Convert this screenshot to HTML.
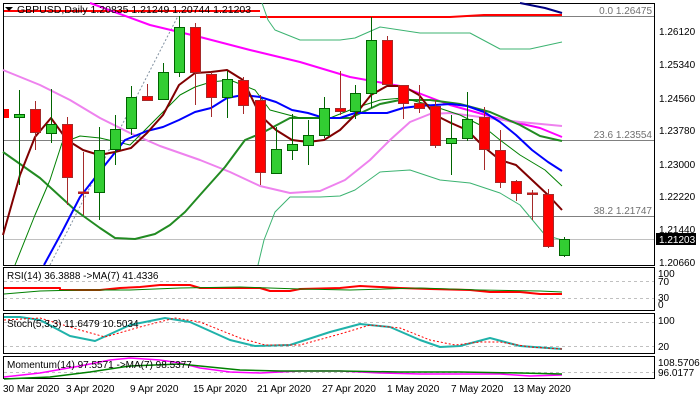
<!DOCTYPE html>
<html><head><meta charset="utf-8"><style>
html,body{margin:0;padding:0;background:#fff;width:700px;height:400px;overflow:hidden}
svg{display:block}
text{font-family:"Liberation Sans",sans-serif;font-size:10px;fill:#000}
polyline{stroke-linejoin:round}
</style></head><body>
<svg width="700" height="400" viewBox="0 0 700 400" xmlns="http://www.w3.org/2000/svg">
<rect width="700" height="400" fill="#fff"/>
<g fill="none" stroke="#000" stroke-width="1">
<rect x="3.5" y="3.5" width="651" height="262"/>
<rect x="3.5" y="267.5" width="651" height="43"/>
<rect x="3.5" y="313.5" width="651" height="40"/>
<rect x="3.5" y="356.5" width="651" height="22"/>
</g>
<g stroke="#808080" stroke-width="1">
<line x1="4" y1="16.5" x2="654" y2="16.5"/>
<line x1="4" y1="140.5" x2="654" y2="140.5"/>
<line x1="4" y1="216.5" x2="654" y2="216.5"/>
</g>
<line x1="4" y1="239.5" x2="654" y2="239.5" stroke="#c0c0c0"/>
<line x1="50" y1="265" x2="178" y2="16" stroke="#8090a0" stroke-dasharray="2,2"/>
<g text-anchor="end">
<text x="652" y="14" style="fill:#707070">0.0 1.26475</text>
<text x="652" y="138" style="fill:#707070">23.6 1.23554</text>
<text x="652" y="214" style="fill:#707070">38.2 1.21747</text>
</g>
<line x1="4" y1="11" x2="260" y2="11" stroke="#f00" stroke-width="2"/>
<polyline points="260,17 450,17 484,15 562,15" stroke="#f00" stroke-width="2" fill="none"/>
<polyline points="520,3 545,8 562,13" stroke="#000080" stroke-width="2" fill="none"/>
<g fill="none" stroke="#3cb371" stroke-width="1">
<polyline points="262,3 268,20 275,30 300,40 340,40 355,38 380,27 420,33 440,33 470,33 500,49 530,49 562,42"/>
<polyline points="258,265 264,240 275,212 290,197 320,197 340,196 355,190 380,172 410,170 440,180 470,183 500,193 520,205 545,235 562,240"/>
</g>
<polyline points="90,3 150,25 200,37 250,50 300,62 350,77 400,86 450,105 500,119 540,128 562,137" fill="none" stroke="#ff00ff" stroke-width="2"/>
<polyline points="3,70 40,85 70,100 100,118 130,133 160,146 200,160 230,172 260,186 290,193 320,191 345,180 370,160 390,140 410,122 430,114 450,113 480,117 520,122 562,126" fill="none" stroke="#ee82ee" stroke-width="2"/>
<polyline points="3,152 40,178 75,210 100,228 115,238 135,239 155,234 170,225 185,212 200,195 225,167 245,140 262,133 290,118 320,118 350,118 380,104 400,100 430,100 460,104 490,112 520,125 540,136 562,141" fill="none" stroke="#228b22" stroke-width="2"/>
<polyline points="15,265 35,215 50,180 62,143 80,136 100,138 130,145 150,125 165,110 180,95 195,87 211,82 230,80 255,90 270,110 300,118 330,118 355,108 380,100 403,98 430,105 460,115 484,127 500,140 520,155 545,170 562,186" fill="none" stroke="#008000" stroke-width="1"/>
<polyline points="44,265 62,232 80,197 105,165 125,140 147,131 163,127 179,120 195,112 211,108 227,98 243,95 260,97 276,102 292,110 308,113 324,118 340,118 355,113 371,113 387,113 403,108 419,106 435,105 451,104 467,106 484,112 500,122 516,135 532,150 548,162 562,171" fill="none" stroke="#0000ff" stroke-width="2"/>
<polyline points="3,235 20,175 35,137 51,118 67,140 83,150 99,155 115,152 131,148 147,133 163,115 179,85 195,73 211,72 227,70 243,80 260,115 276,130 292,140 308,142 324,140 340,130 355,115 371,95 387,86 403,86 419,95 435,115 451,123 467,130 484,147 500,160 516,165 532,180 548,195 562,210" fill="none" stroke="#800000" stroke-width="2"/>
<g stroke-width="1">
<g stroke="#006400" fill="#32cd32">
<line x1="19.5" y1="90" x2="19.5" y2="185"/><rect x="14.5" y="114.5" width="10" height="3"/>
<line x1="51.5" y1="89" x2="51.5" y2="143"/><rect x="46.5" y="124.5" width="10" height="9"/>
<line x1="99.5" y1="127" x2="99.5" y2="220"/><rect x="94.5" y="150.5" width="10" height="42"/>
<line x1="115.5" y1="115" x2="115.5" y2="165"/><rect x="110.5" y="129.5" width="10" height="20"/>
<line x1="131.5" y1="86" x2="131.5" y2="135"/><rect x="126.5" y="97.5" width="10" height="31"/>
<line x1="163.5" y1="63" x2="163.5" y2="99"/><rect x="158.5" y="72.5" width="10" height="27"/>
<line x1="179.5" y1="16" x2="179.5" y2="77"/><rect x="174.5" y="27.5" width="10" height="45"/>
<line x1="227.5" y1="71" x2="227.5" y2="118"/><rect x="222.5" y="79.5" width="10" height="18"/>
<line x1="276.5" y1="127" x2="276.5" y2="174"/><rect x="271.5" y="149.5" width="10" height="24"/>
<line x1="292.5" y1="114" x2="292.5" y2="160"/><rect x="287.5" y="144.5" width="10" height="6"/>
<line x1="308.5" y1="120" x2="308.5" y2="165"/><rect x="303.5" y="135.5" width="10" height="10"/>
<line x1="324.5" y1="97" x2="324.5" y2="138"/><rect x="319.5" y="108.5" width="10" height="27"/>
<line x1="355.5" y1="85" x2="355.5" y2="119"/><rect x="350.5" y="93.5" width="10" height="18"/>
<line x1="371.5" y1="17" x2="371.5" y2="108"/><rect x="366.5" y="40.5" width="10" height="53"/>
<line x1="451.5" y1="115" x2="451.5" y2="175"/><rect x="446.5" y="138.5" width="10" height="5"/>
<line x1="467.5" y1="92" x2="467.5" y2="141"/><rect x="462.5" y="119.5" width="10" height="19"/>
<line x1="564.5" y1="237" x2="564.5" y2="257"/><rect x="559.5" y="239.5" width="10" height="16"/>
</g>
<g stroke="#a52a2a" fill="#f00">
<rect x="4" y="109" width="5" height="9" stroke="none"/>
<line x1="35.5" y1="101" x2="35.5" y2="150"/><rect x="30.5" y="109.5" width="10" height="23"/>
<line x1="67.5" y1="117" x2="67.5" y2="205"/><rect x="62.5" y="124.5" width="10" height="53"/>
<line x1="83.5" y1="152" x2="83.5" y2="215"/><rect x="78.5" y="192" width="10" height="1.5"/>
<line x1="147.5" y1="84" x2="147.5" y2="101"/><rect x="142.5" y="96.5" width="10" height="4"/>
<line x1="195.5" y1="23" x2="195.5" y2="105"/><rect x="190.5" y="27.5" width="10" height="45"/>
<line x1="211.5" y1="72" x2="211.5" y2="117"/><rect x="206.5" y="74.5" width="10" height="23"/>
<line x1="243.5" y1="77" x2="243.5" y2="114"/><rect x="238.5" y="80.5" width="10" height="25"/>
<line x1="260.5" y1="95" x2="260.5" y2="185"/><rect x="255.5" y="100.5" width="10" height="72"/>
<line x1="340.5" y1="71" x2="340.5" y2="115"/><rect x="335.5" y="108.5" width="10" height="3"/>
<line x1="387.5" y1="36" x2="387.5" y2="84"/><rect x="382.5" y="40.5" width="10" height="44"/>
<line x1="403.5" y1="85" x2="403.5" y2="119"/><rect x="398.5" y="85.5" width="10" height="18"/>
<line x1="419.5" y1="85" x2="419.5" y2="113"/><rect x="414.5" y="103.5" width="10" height="5"/>
<line x1="435.5" y1="100" x2="435.5" y2="148"/><rect x="430.5" y="106.5" width="10" height="39"/>
<line x1="484.5" y1="107" x2="484.5" y2="170"/><rect x="479.5" y="117.5" width="10" height="32"/>
<line x1="500.5" y1="130" x2="500.5" y2="188"/><rect x="495.5" y="150.5" width="10" height="32"/>
<line x1="516.5" y1="180" x2="516.5" y2="201"/><rect x="511.5" y="181.5" width="10" height="12"/>
<line x1="532.5" y1="190" x2="532.5" y2="220"/><rect x="527.5" y="193" width="10" height="1.5"/>
<line x1="548.5" y1="189" x2="548.5" y2="248"/><rect x="543.5" y="194.5" width="10" height="52"/>
</g>
</g>
<path d="M5,7 L13,7 L9,11 Z" fill="#000"/>
<text x="17" y="13" style="font-size:10.5px">GBPUSD,Daily  1.20835 1.21249 1.20744 1.21203</text>
<g>
<text x="659" y="35">1.26120</text>
<text x="659" y="68">1.25340</text>
<text x="659" y="102">1.24560</text>
<text x="659" y="134">1.23780</text>
<text x="659" y="168">1.23000</text>
<text x="659" y="200">1.22220</text>
<text x="659" y="233">1.21440</text>
<text x="659" y="266">1.20660</text>
</g>
<rect x="656" y="233" width="40" height="12" fill="#000"/>
<text x="659" y="243" style="fill:#fff">1.21203</text>
<g stroke="#c0c0c0" stroke-dasharray="3,3"><line x1="4" y1="281.5" x2="654" y2="281.5"/><line x1="4" y1="298.5" x2="654" y2="298.5"/>
<line x1="4" y1="322.5" x2="654" y2="322.5"/><line x1="4" y1="346.5" x2="654" y2="346.5"/><line x1="4" y1="372.5" x2="654" y2="372.5"/></g>
<polyline points="4,288 60,288 60,290 100,290 120,288 140,287 160,285 190,285 200,288 260,288 270,291 290,291 300,289 340,288 360,286 400,288 430,289 470,290 490,292 520,292 540,294 562,294" fill="none" stroke="#f00" stroke-width="2"/>
<polyline points="4,294 40,291 80,290 130,290 180,288 240,287 300,289 350,290 420,288 480,290 540,291 562,292" fill="none" stroke="#008000" stroke-width="1"/>
<text x="7" y="279">RSI(14) 36.3888  -&gt;MA(7) 41.4336</text>
<text x="658" y="277">100</text><text x="658" y="285">70</text><text x="658" y="301">30</text><text x="658" y="308">0</text>
<polyline points="4,317 20,317 40,320 70,336 95,341 130,325 165,318 190,322 230,340 255,346 290,345 330,332 360,324 390,327 420,340 440,347 460,346 490,338 520,346 562,349" fill="none" stroke="#20b2aa" stroke-width="2"/>
<polyline points="4,320 40,318 80,330 105,337 140,327 175,318 200,322 240,338 265,345 300,345 340,334 370,325 400,328 430,340 455,345 480,342 500,342 530,347 562,349" fill="none" stroke="#f00" stroke-width="1" stroke-dasharray="2,2"/>
<text x="7" y="327">Stoch(5,3,3) 11.6479 10.5034</text>
<text x="658" y="324">100</text><text x="658" y="350">20</text>
<polyline points="4,377 40,373 80,366 110,360 130,358 160,360 180,363 200,368 230,372 260,373 300,371 340,371 380,373 420,374 460,374 500,374 530,376 562,375" fill="none" stroke="#ff00ff" stroke-width="1.5"/>
<polyline points="4,379 50,377 90,372 130,366 180,364 210,367 240,370 280,371 340,371 400,372 460,372 520,373 562,374" fill="none" stroke="#008000" stroke-width="1.5"/>
<text x="7" y="368">Momentum(14) 97.5571  -&gt;MA(7) 98.5377</text>
<text x="658" y="366">108.5706</text><text x="658" y="376">96.0177</text>
<g>
<text x="3" y="392">30 Mar 2020</text>
<text x="66" y="392">3 Apr 2020</text>
<text x="130" y="392">9 Apr 2020</text>
<text x="193" y="392">15 Apr 2020</text>
<text x="257" y="392">21 Apr 2020</text>
<text x="322" y="392">27 Apr 2020</text>
<text x="387" y="392">1 May 2020</text>
<text x="451" y="392">7 May 2020</text>
<text x="513" y="392">13 May 2020</text>
</g>
</svg>
</body></html>
